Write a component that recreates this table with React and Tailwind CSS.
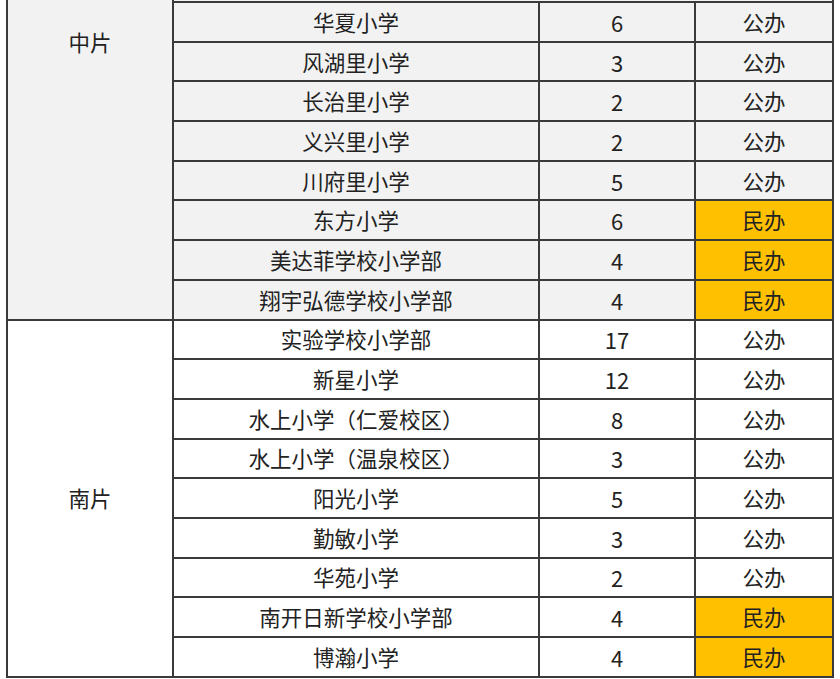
import React from "react";

const north = [
  ["华夏小学", "6", "公办"],
  ["风湖里小学", "3", "公办"],
  ["长治里小学", "2", "公办"],
  ["义兴里小学", "2", "公办"],
  ["川府里小学", "5", "公办"],
  ["东方小学", "6", "民办"],
  ["美达菲学校小学部", "4", "民办"],
  ["翔宇弘德学校小学部", "4", "民办"],
];

const south = [
  ["实验学校小学部", "17", "公办"],
  ["新星小学", "12", "公办"],
  ["水上小学（仁爱校区）", "8", "公办"],
  ["水上小学（温泉校区）", "3", "公办"],
  ["阳光小学", "5", "公办"],
  ["勤敏小学", "3", "公办"],
  ["华苑小学", "2", "公办"],
  ["南开日新学校小学部", "4", "民办"],
  ["博瀚小学", "4", "民办"],
];

function Row({ r }) {
  const priv = r[2] === "民办";
  return (
    <div className="flex h-[39.7px] border-t-2 border-[#3a3a3a]">
      <div className="w-[366px] border-r-2 border-[#3a3a3a] flex items-center justify-center">
        {r[0]}
      </div>
      <div className="w-[156px] border-r-2 border-[#3a3a3a] flex items-center justify-center text-[22px]">
        {r[1]}
      </div>
      <div
        className={`w-[136px] flex items-center justify-center ${
          priv ? "bg-[#ffc000]" : ""
        }`}
      >
        {r[2]}
      </div>
    </div>
  );
}

export default function App() {
  return (
    <div
      className="w-[840px] h-[679px] bg-white text-[21.5px] leading-[30px] text-[#222]"
      style={{ fontFamily: '"Noto Sans CJK SC", "Noto Sans", sans-serif' }}
    >
      <div className="ml-[6px] w-[828px] border-l-2 border-r-2 border-b-2 border-[#3a3a3a]">
        <div className="flex bg-[#f2f2f2]">
          <div className="w-[166px] border-r-2 border-[#3a3a3a] flex justify-center pt-[27px]">
            中片
          </div>
          <div className="flex flex-col pt-[1px]">
            {north.map((r, i) => (
              <Row key={i} r={r} />
            ))}
          </div>
        </div>
        <div className="flex bg-white">
          <div className="w-[166px] border-t-2 border-r-2 border-[#3a3a3a] flex items-center justify-center">
            南片
          </div>
          <div className="flex flex-col">
            {south.map((r, i) => (
              <Row key={i} r={r} />
            ))}
          </div>
        </div>
      </div>
    </div>
  );
}
